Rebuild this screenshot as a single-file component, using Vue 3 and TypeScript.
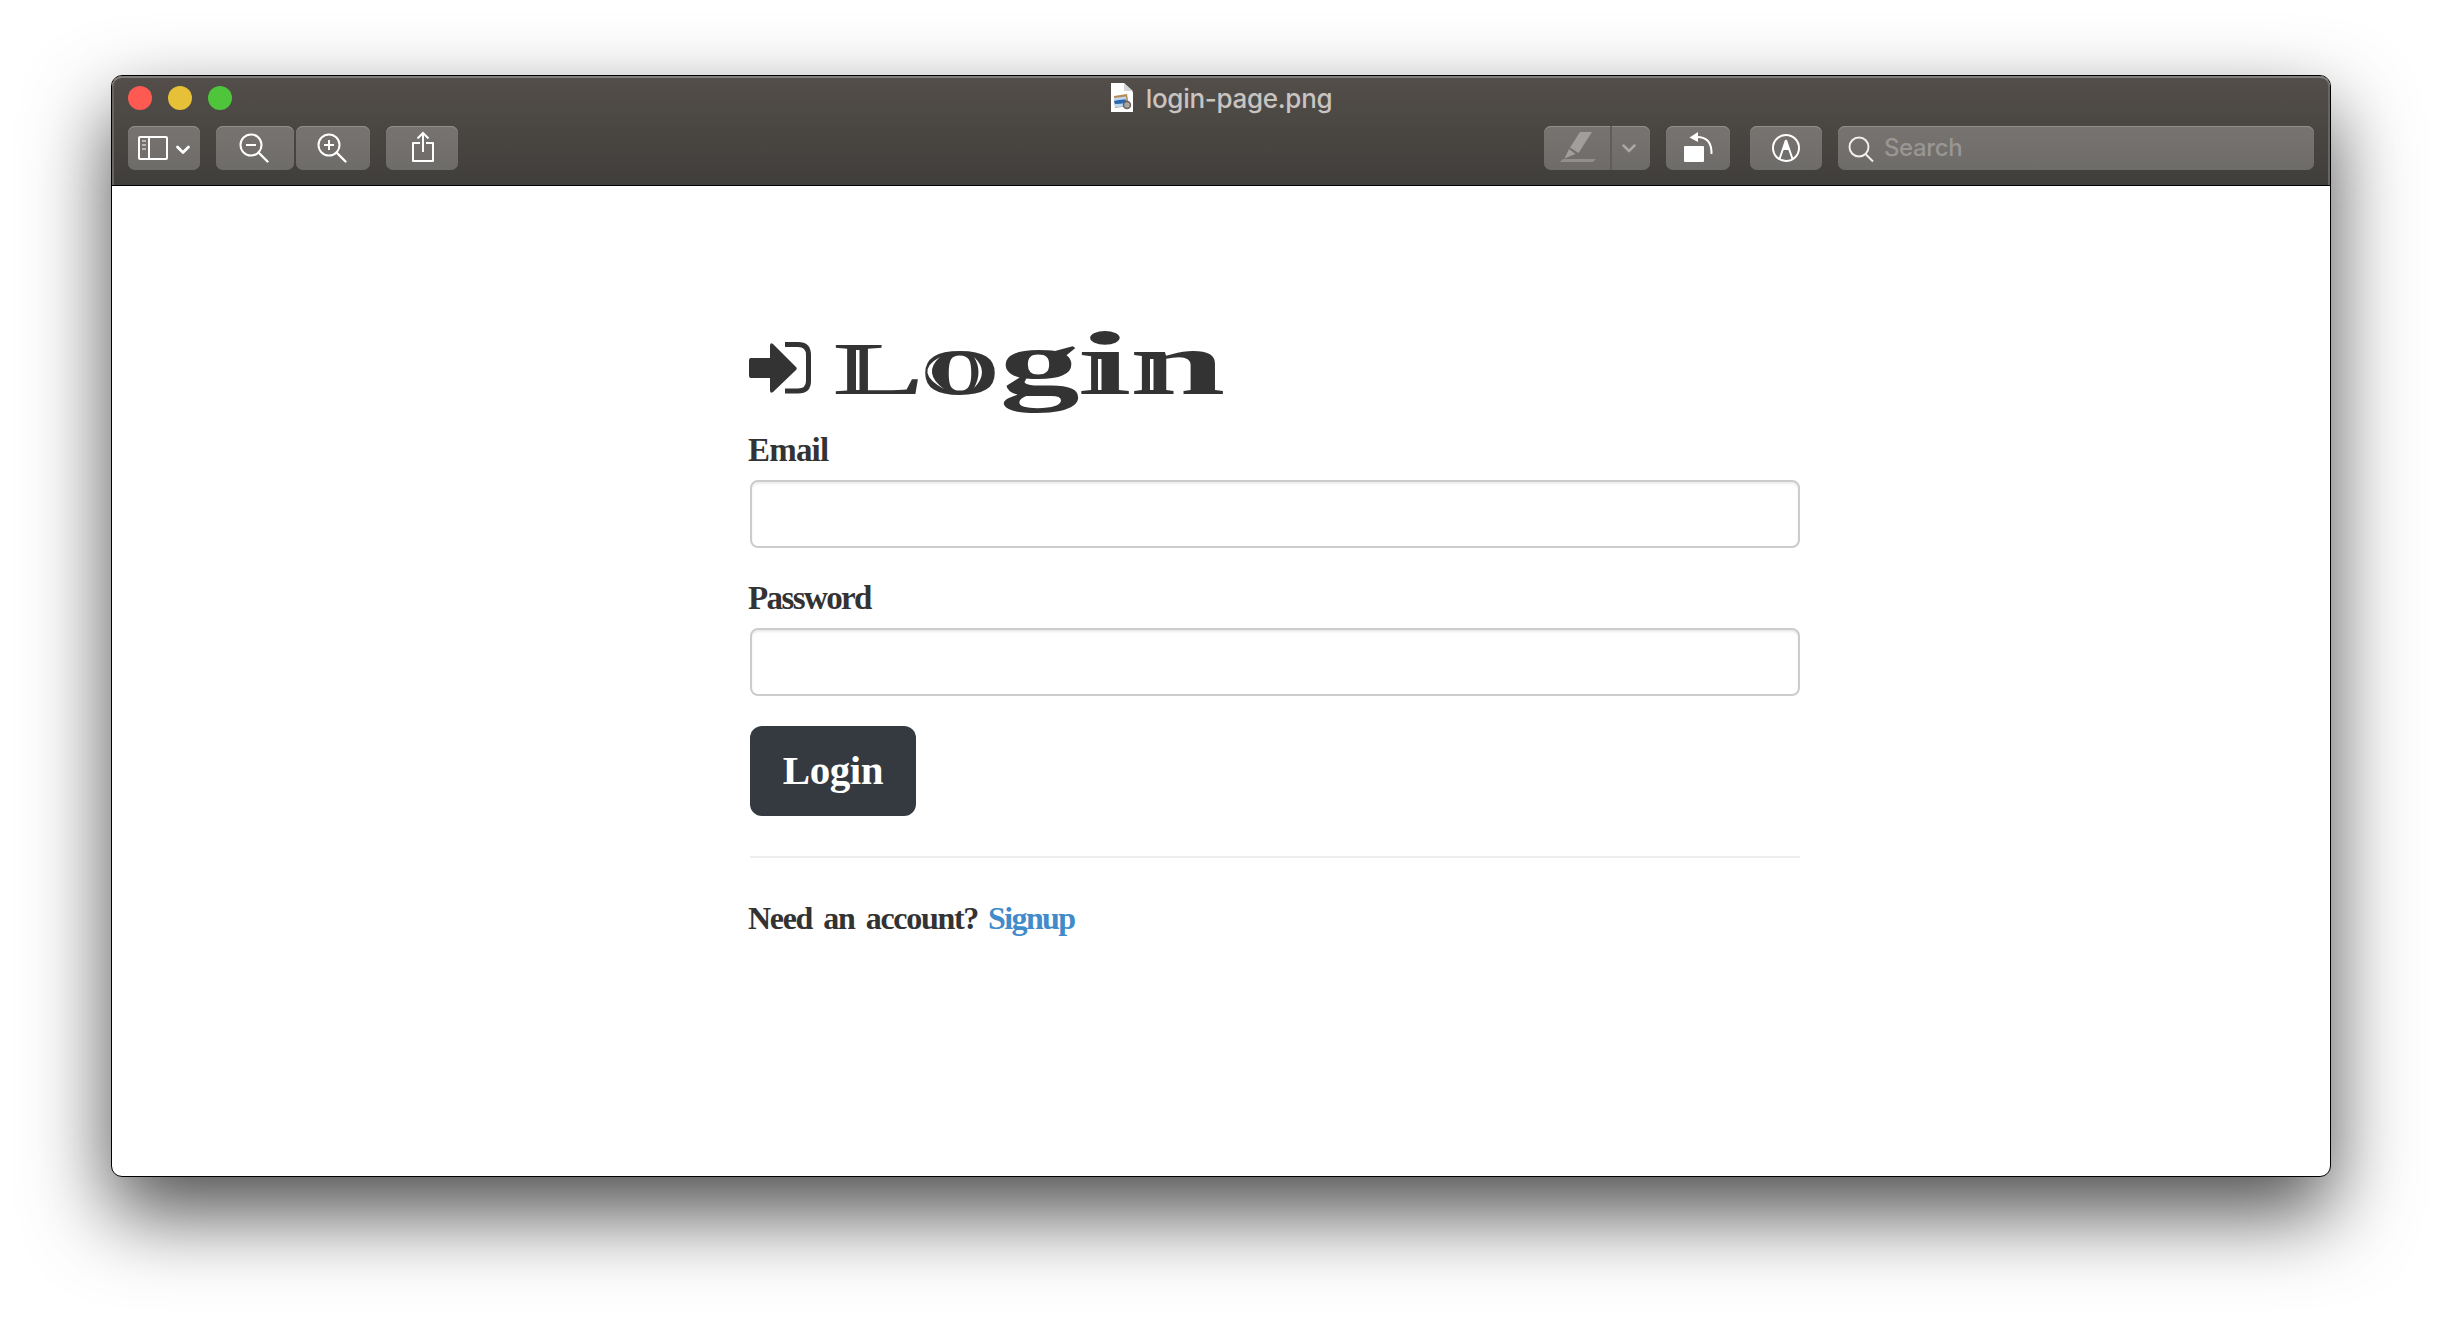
<script setup lang="ts">
import { ref } from 'vue'

interface Field { id: string; label: string; type: string }
interface Glyph { char: string; x: number; size: number; length: number }

const fields: Field[] = [
  { id: 'email', label: 'Email', type: 'email' },
  { id: 'password', label: 'Password', type: 'password' },
]
const values = ref<Record<string, string>>({ email: '', password: '' })
const lights = ['#ff5a52', '#e6c037', '#4fc53c']

// Extended display lettering: every letter has its own width.
const heading: Glyph[] = [
  { char: 'L', x: 85.4, size: 73, length: 90.1 },
  { char: 'o', x: 170.9, size: 92, length: 82 },
  { char: 'g', x: 251.5, size: 90, length: 80.2 },
  { char: 'i', x: 328.9, size: 90, length: 54.7 },
  { char: 'n', x: 381.4, size: 90, length: 96 },
]
</script>

<template>
  <div class="stage">
    <main class="window">
      <header class="chrome">
        <div class="titlebar">
          <div class="lights"><i v-for="c in lights" :key="c" :style="{ background: c }"></i></div>
          <div class="title">
            <svg width="24" height="32" viewBox="0 0 24 32">
              <path d="M1 1H14L23 10V30H1Z" fill="#fff" />
              <path d="M14 1V9H23Z" fill="#d4d4d4" />
              <path d="M4 14L17 12L19 24L5 26Z" fill="#b88b55" />
              <path d="M4 16L16 14.5L17 24L5 25.500Z" fill="#b9d7f3" />
              <path d="M4 19Q10 17 16 17.500V21Q10 22 5 22Z" fill="#2b66b1" />
              <circle cx="17" cy="23" r="3.500" fill="#aaa49f" stroke="#68615d" stroke-width="1.500" />
            </svg>
            <span>login-page.png</span>
          </div>
        </div>
        <div class="toolbar">
          <button class="tool sidebar" aria-label="Sidebar">
            <svg width="72" height="44" viewBox="0 0 72 44" fill="none" stroke="#fff" stroke-width="2">
              <rect x="11" y="11" width="28" height="22" rx="1" />
              <path d="M21 11V33" />
              <path d="M14 15H18M14 19H18M14 23H18" stroke="#bbb8b6" />
              <path d="M49.500 21L55 26.500L60.500 21" stroke-width="2.800" stroke-linecap="round" stroke-linejoin="round" />
            </svg>
          </button>
          <button class="tool out" aria-label="Zoom out">
            <svg width="78" height="44" viewBox="0 0 78 44" fill="none" stroke="#fff" stroke-width="2">
              <circle cx="35" cy="19" r="10.500" /><path d="M30 19H40" /><path d="M42.500 26.500L51.500 35.500" stroke-width="2.400" stroke-linecap="round" />
            </svg>
          </button>
          <button class="tool in" aria-label="Zoom in">
            <svg width="74" height="44" viewBox="0 0 74 44" fill="none" stroke="#fff" stroke-width="2">
              <circle cx="33" cy="19" r="10.500" /><path d="M28 19H38M33 14V24" /><path d="M40.500 26.500L49.500 35.500" stroke-width="2.400" stroke-linecap="round" />
            </svg>
          </button>
          <button class="tool share" aria-label="Share">
            <svg width="72" height="44" viewBox="0 0 72 44" fill="none" stroke="#fff" stroke-width="2">
              <path d="M34 17H27V35H47V17H40M37 26V8" stroke-linejoin="round" /><path d="M31.500 12.500L37 7L42.500 12.500" />
            </svg>
          </button>
          <span class="space"></span>
          <button class="tool marker" aria-label="Highlight">
            <svg width="106" height="44" viewBox="0 0 106 44">
              <path d="M36 6H48L34.500 27L26 21.500ZM25 23L31.500 28L20.500 32.500Z" fill="#a19e9c" />
              <path d="M19 33H52L49 36H16Z" fill="#918e8c" />
              <path d="M66 0H68V44H66Z" fill="#5f5c5a" />
              <path d="M79.500 19.500L85 25L90.500 19.500" fill="none" stroke="#aaa7a5" stroke-width="2.500" stroke-linecap="round" />
            </svg>
          </button>
          <button class="tool rotate" aria-label="Rotate">
            <svg width="64" height="44" viewBox="0 0 64 44">
              <rect x="18" y="20" width="20" height="16" rx="1" fill="#fff" />
              <path d="M23.500 11.500L32 6V16Z" fill="#fff" /><path d="M31 11Q46 11 45.500 28" fill="none" stroke="#fff" stroke-width="2" />
            </svg>
          </button>
          <button class="tool markup" aria-label="Markup">
            <svg width="72" height="44" viewBox="0 0 72 44">
              <circle cx="36" cy="22" r="13" fill="none" stroke="#fff" stroke-width="2" />
              <path d="M36 14L32.500 24H39.500Z" fill="#fff" />
              <path d="M36 14L29.500 33M36 14L42.500 33" stroke="#fff" stroke-width="2" />
            </svg>
          </button>
          <label class="tool search">
            <svg width="46" height="44" viewBox="0 0 46 44" fill="none" stroke="#f0efee" stroke-width="2">
              <circle cx="21" cy="21" r="9.500" /><path d="M27.500 28L35 35.500" />
            </svg>
            <span>Search</span>
          </label>
        </div>
      </header>
      <section class="page">
        <form class="form" @submit.prevent>
          <h1>
            <svg width="500" height="100" viewBox="0 0 500 100">
              <path d="M3 38H22V26Q22 22 25 24L48 47Q49.500 48.500 48 50L25 72Q22 74 22 70V58H3Q1 58 1 56V40Q1 38 3 38Z" fill="#333" />
              <path d="M37 24.500H50Q60.500 24.500 60.500 35V61Q60.500 71 50 71H37" fill="none" stroke="#333" stroke-width="5" />
              <text v-for="g in heading" :key="g.char" :x="g.x" y="74" :font-size="g.size" :textLength="g.length" lengthAdjust="spacingAndGlyphs">{{ g.char }}</text>
              <!-- engraved highlights over the lettering -->
              <g fill="#fff">
                <path d="M108 30H111.500V70H108ZM350 39H353.500V70H350ZM402 39H405.500V70H402Z" />
                <path d="M192 37Q165 52 196 69Q174 53 192 37ZM226 37Q242 52 226 68Q235 52 226 37Z" />
              </g>
            </svg>
          </h1>
          <div v-for="f in fields" :key="f.id" class="group">
            <label :for="f.id" :class="f.id">{{ f.label }}</label>
            <input :id="f.id" v-model="values[f.id]" :type="f.type" />
          </div>
          <button class="submit" type="submit">Login</button>
          <hr />
          <p><span>Need an account?</span><a>Signup</a></p>
        </form>
      </section>
    </main>
  </div>
</template>

<style>
body { background: #fff; overflow: hidden; }
</style>

<style scoped>
* { box-sizing: border-box; }
.stage { width: 2442px; height: 1324px; padding: 75px 111px; overflow: hidden; }
.window { width: 2220px; height: 1102px; border: 1px solid #000; border-radius: 11px; background: #fff; overflow: hidden; box-shadow: 0 36px 82px rgba(0, 0, 0, .7); }
.chrome { height: 110px; background: linear-gradient(#534e4a, #403e3b); border-bottom: 1.500px solid #000; box-shadow: inset 0 2px #827e7b, inset 2px 0 #686461, inset -2px 0 #686461; border-radius: 10px 10px 0 0; font-family: Inter, "Liberation Sans", sans-serif; }
.titlebar { height: 50px; display: grid; grid-template-columns: 1fr auto 1fr; padding: 0 16px; }
.lights { display: flex; gap: 16px; padding-top: 10px; }
.lights i { width: 24px; height: 24px; border-radius: 50%; }
.title { display: flex; gap: 12px; height: 32px; margin-top: 6px; align-items: center; color: #c9c4c1; font-size: 26px; line-height: 32px; letter-spacing: -.3px; font-weight: 450; }
.title span { padding-top: 2px; }
.toolbar { display: flex; padding: 0 16px; }
.tool { display: flex; height: 44px; padding: 0; border: 0; border-radius: 7px; background: linear-gradient(#777370, #6e6c6a); box-shadow: inset 0 1px #92908e; flex: none; font: inherit; }
.tool svg { display: block; }
.sidebar { width: 72px; margin-right: 16px; }
.out { width: 78px; margin-right: 2px; }
.in { width: 74px; margin-right: 16px; }
.share { width: 72px; }
.space { flex: 1; }
.marker { width: 106px; margin-right: 16px; }
.rotate { width: 64px; margin-right: 20px; }
.markup { width: 72px; margin-right: 16px; }
.search { width: 476px; align-items: center; color: #999694; font-size: 24px; font-weight: 450; letter-spacing: -.4px; }
.search span { padding-bottom: 2px; }
.page { padding: 128px 0 0 638px; font-family: "Liberation Serif", serif; font-weight: 700; color: #333; }
.form { width: 1050px; }
h1 { margin: 0 0 0 -2px; height: 118px; padding-top: 6px; }
h1 svg { display: block; overflow: visible; }
h1 text { fill: #333; font-family: "Liberation Serif", serif; font-weight: 700; }
.group { height: 148px; }
.group label { display: block; height: 48px; margin-left: -2px; font-size: 33px; line-height: 36px; letter-spacing: -.8px; }
.group label.password { letter-spacing: -1.600px; }
.group input { display: block; width: 1050px; height: 68px; border: 2px solid #ccc; border-radius: 8px; background: #fff; box-shadow: inset 0 2px 2px rgba(0, 0, 0, .075); outline: none; padding: 0 24px; font-size: 28px; }
.submit { display: block; width: 166px; height: 90px; margin: -2px 0 40px; padding: 0 0 2px; border: 0; border-radius: 12px; background: #343a40; color: #fff; font: 700 41px/88px "Liberation Serif", serif; letter-spacing: -.4px; }
hr { height: 2px; margin: 0; border: 0; background: #eee; }
p { margin: 41px 0 0 -2px; display: flex; font-size: 32px; line-height: 38px; }
p span { width: 240px; letter-spacing: -1.300px; word-spacing: 4.500px; white-space: nowrap; }
p a { color: #428bca; letter-spacing: -1.600px; }
</style>
